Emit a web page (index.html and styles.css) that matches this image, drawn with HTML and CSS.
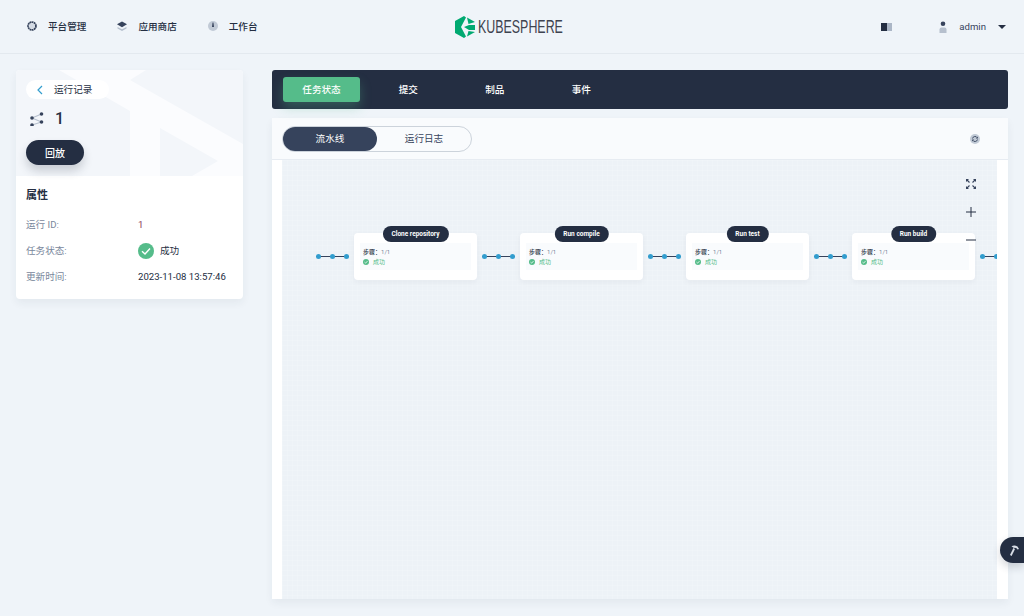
FILE: index.html
```html
<!DOCTYPE html>
<html lang="zh">
<head>
  <meta charset="UTF-8" />
  <meta name="viewport" content="width=device-width, initial-scale=1.0"/>
  <title>运行记录 - KubeSphere</title>
  <link rel="stylesheet" href="styles.css">
</head>
<body>

  <header class="topbar">
    <nav class="top-nav">
      <a class="top-link">
        <svg class="top-icon" viewBox="0 0 12 12"><circle cx="6" cy="6" r="3.9" fill="none" stroke="#36435c" stroke-width="1.900" stroke-dasharray="1.800 .4"/><circle cx="6" cy="6" r="2.700" fill="#d3dae4"/></svg>
        平台管理
      </a>
      <a class="top-link">
        <svg class="top-icon" viewBox="0 0 12 12"><path d="M1.500 7 6 9.200 10.500 7v1.600L6 11 1.500 8.600z" fill="#b6c0ce"/><path d="M6 1.500 11 4.300 6 7.200 1 4.300z" fill="#36435c"/></svg>
        应用商店
      </a>
      <a class="top-link">
        <svg class="top-icon" viewBox="0 0 12 12"><circle cx="6" cy="6" r="5" fill="#c1cad6"/><path d="M5.600 2.500h.8l.6 4.500H5z" fill="#36435c"/></svg>
        工作台
      </a>
    </nav>

    <div class="logo">
      <svg class="logo-mark" viewBox="0 0 20 22"><path d="M9 0 0 5V17L9 22 11 20.500 6 11 11 1.500z" fill="#00a971"/><path d="M12 1.500 20 6 13.500 8zM9 11 14 9H20V14H14zM13.500 15 20 16 12 20.500z" fill="#00a971"/></svg>
      <span class="logo-text">KUBESPHERE</span>
    </div>

    <div class="top-right">
      <svg class="mode-icon" viewBox="0 0 11 8"><rect width="6" height="8" fill="#242e42"/><rect x="6" width="5" height="8" fill="#abb6c6"/></svg>
      <svg class="user-icon" viewBox="0 0 10 12"><circle cx="5" cy="2.800" r="2.300" fill="#36435c"/><path d="M1.500 12V8.500Q1.500 6.500 3.500 6.500H6.500Q8.500 6.500 8.500 8.500V12z" fill="#b6c0ce"/></svg>
      <span class="user-name">admin</span>
      <span class="caret"></span>
    </div>
  </header>

  <main class="content">
    <aside class="side-card">
      <div class="banner">
        <svg class="banner-art" viewBox="0 0 227 106" preserveAspectRatio="none">
          <path fill-rule="evenodd" d="M43 0H130L114 10 227 74V106H114V41zM144 58 202 91 176 106H144z" fill="#fbfcfe"/>
        </svg>
        <div class="banner-body">
          <a class="back-pill">
            <svg class="back-icon" viewBox="0 0 6 10"><path d="M5 1 1 5 5 9" fill="none" stroke="#329dce" stroke-width="1.200"/></svg>
            运行记录
          </a>
          <div class="run-title">
            <svg class="run-icon" viewBox="0 0 14 14"><path d="M2 6 11.500 2M2 6 11.500 10M11.500 10 2 13" stroke="#b6c0ce" stroke-width="1.100" fill="none"/><circle cx="2" cy="6" r="1.800" fill="#36435c"/><circle cx="11.500" cy="2" r="1.800" fill="#36435c"/><circle cx="11.500" cy="10" r="1.800" fill="#36435c"/><circle cx="2" cy="13" r="1.800" fill="#36435c"/></svg>
            <span>1</span>
          </div>
          <button class="replay-btn">回放</button>
        </div>
      </div>
      <div class="props">
        <h3>属性</h3>
        <dl class="prop-list">
          <dt>运行 ID:</dt>
          <dd class="run-id">1</dd>
          <dt>任务状态:</dt>
          <dd class="status">
            <svg class="status-icon" viewBox="0 0 16 16"><circle cx="8" cy="8" r="8" fill="#55bc8a"/><path d="M4 8.300 7 11 12 5.500" fill="none" stroke="#fff" stroke-width="1.400"/></svg>
            成功
          </dd>
          <dt>更新时间:</dt>
          <dd>2023-11-08 13:57:46</dd>
        </dl>
      </div>
    </aside>

    <section class="main-col">
      <div class="tabs">
        <a class="tab tab-active">任务状态</a>
        <a class="tab">提交</a>
        <a class="tab">制品</a>
        <a class="tab">事件</a>
      </div>

      <div class="panel">
        <div class="toolbar">
          <div class="switch">
            <span class="switch-item switch-on">流水线</span>
            <span class="switch-item">运行日志</span>
          </div>
          <svg class="refresh" viewBox="0 0 10 10"><circle cx="5" cy="5" r="5" fill="#c1cad6"/><path d="M2.500 4.500A2.600 2.600 0 0 1 7.300 3.800M7.500 5.500A2.600 2.600 0 0 1 2.700 6.200" fill="none" stroke="#36435c" stroke-width=".9"/><path d="M7.800 2.500V4.400H5.900zM2.200 7.500V5.600H4.100z" fill="#36435c"/></svg>
        </div>

        <div class="canvas-wrap">
          <div class="canvas">
            <div class="zoom-tools">
              <svg viewBox="0 0 10 10"><path d="M.5.500 3.500 3.500M9.500.500 6.500 3.500M.5 9.500 3.500 6.500M9.500 9.500 6.500 6.500" stroke="#36435c" stroke-width="1.100"/><path d="M0 0H3L0 3zM10 0H7L10 3zM0 10H3L0 7zM10 10H7L10 7z" fill="#36435c"/></svg>
              <svg viewBox="0 0 10 10"><path d="M5 0V10M0 5H10" stroke="#242e42" stroke-width="1"/></svg>
              <svg viewBox="0 0 10 10"><path d="M0 5H10" stroke="#242e42" stroke-width="1"/></svg>
            </div>
            <div class="pipeline">
              <span class="link"><i></i><i></i><i></i></span>
              <div class="node">
                <span class="node-name">Clone repository</span>
                <div class="node-body">
                  <p class="node-steps">步骤：<em>1/1</em></p>
                  <p class="node-state"><svg viewBox="0 0 16 16"><circle cx="8" cy="8" r="8" fill="#55bc8a"/><path d="M4 8.300 7 11 12 5.500" fill="none" stroke="#fff" stroke-width="2"/></svg>成功</p>
                </div>
              </div>
              <span class="link"><i></i><i></i><i></i></span>
              <div class="node">
                <span class="node-name">Run compile</span>
                <div class="node-body">
                  <p class="node-steps">步骤：<em>1/1</em></p>
                  <p class="node-state"><svg viewBox="0 0 16 16"><circle cx="8" cy="8" r="8" fill="#55bc8a"/><path d="M4 8.300 7 11 12 5.500" fill="none" stroke="#fff" stroke-width="2"/></svg>成功</p>
                </div>
              </div>
              <span class="link"><i></i><i></i><i></i></span>
              <div class="node">
                <span class="node-name">Run test</span>
                <div class="node-body">
                  <p class="node-steps">步骤：<em>1/1</em></p>
                  <p class="node-state"><svg viewBox="0 0 16 16"><circle cx="8" cy="8" r="8" fill="#55bc8a"/><path d="M4 8.300 7 11 12 5.500" fill="none" stroke="#fff" stroke-width="2"/></svg>成功</p>
                </div>
              </div>
              <span class="link"><i></i><i></i><i></i></span>
              <div class="node">
                <span class="node-name">Run build</span>
                <div class="node-body">
                  <p class="node-steps">步骤：<em>1/1</em></p>
                  <p class="node-state"><svg viewBox="0 0 16 16"><circle cx="8" cy="8" r="8" fill="#55bc8a"/><path d="M4 8.300 7 11 12 5.500" fill="none" stroke="#fff" stroke-width="2"/></svg>成功</p>
                </div>
              </div>
              <span class="link"><i></i><i></i><i></i></span>
            </div>
          </div>
        </div>
      </div>
    </section>
  </main>

  <a class="tool-btn">
    <svg viewBox="0 0 10 12"><path d="M5.200 4.500 1.800 11.500" stroke="#d8dee7" stroke-width="1.800"/><path d="M2.500 2.200Q5.500.5 8.500 2.500L10 5 8.500 5.500 7.200 4 4.500 3.700z" fill="#d8dee7"/></svg>
  </a>

</body>
</html>
```

FILE: styles.css
```css
* {
  box-sizing: border-box;
}

html, body {
  height: 100%;
}

body {
  margin: 0;
  overflow: hidden;
  background-color: #eff4f9;
  color: #242e42;
  font-family: Roboto, "Noto Sans CJK SC", sans-serif;
  font-size: 9.600px;
  line-height: 14px;
}

/* top bar */
.topbar {
  display: grid;
  grid-template-columns: 1fr auto 1fr;
  align-items: center;
  height: 54px;
  padding: 0 18px 0 26px;
  border-bottom: 1px solid #e3e9ef;
}

.top-nav {
  display: flex;
  gap: 30px;
}

.top-link {
  display: flex;
  align-items: center;
  gap: 10px;
  font-weight: 500;
}

.top-icon {
  width: 12px;
  height: 12px;
  margin-top: -2px;
}

.logo {
  display: flex;
  align-items: center;
  gap: 3px;
  margin-right: 15px;
}

.logo-mark {
  width: 20px;
  height: 22px;
}

.logo-text {
  width: 85px;
  color: #3e4350;
  font-family: "Liberation Sans", sans-serif;
  font-size: 18px;
  line-height: 20px;
  white-space: nowrap;
  transform: scaleX(0.69);
  transform-origin: left center;
}

.top-right {
  display: flex;
  align-items: center;
  justify-content: flex-end;
}

.mode-icon {
  width: 11px;
  height: 8px;
  margin-right: 46px;
}

.user-icon {
  width: 10px;
  height: 12px;
  margin-right: 11px;
}

.user-name {
  margin-right: 12px;
  color: #36435c;
}

.caret {
  width: 0;
  height: 0;
  border-top: 4px solid #242e42;
  border-left: 4px solid transparent;
  border-right: 4px solid transparent;
}

/* page columns */
.content {
  display: flex;
  align-items: flex-start;
  gap: 29px;
  padding: 16px 16px 0;
}

/* left card */
.side-card {
  flex: none;
  width: 227px;
  border-radius: 4px;
  background-color: #fff;
  box-shadow: 0 4px 8px rgba(36, 46, 66, 0.06);
  overflow: hidden;
}

.banner {
  position: relative;
  height: 106px;
  background-color: #f3f6fa;
}

.banner-art {
  position: absolute;
  top: 0;
  left: 0;
  width: 100%;
  height: 100%;
}

.banner-body {
  position: relative;
  display: flex;
  flex-direction: column;
  align-items: flex-start;
  padding: 10px 10px 0;
}

.back-pill {
  display: flex;
  align-items: center;
  gap: 11px;
  width: 83px;
  height: 19px;
  padding-left: 11px;
  border-radius: 10px;
  background-color: #fff;
}

.back-icon {
  width: 6px;
  height: 10px;
}

.run-title {
  display: flex;
  align-items: center;
  gap: 11px;
  height: 22px;
  margin: 9px 0 0 4px;
  font-size: 16px;
  font-weight: 500;
}

.run-icon {
  width: 14px;
  height: 14px;
}

.replay-btn {
  width: 58px;
  height: 25px;
  margin-top: 10px;
  padding: 0;
  border: none;
  border-radius: 13px;
  background-color: #242e42;
  box-shadow: 0 6px 10px rgba(36, 46, 66, 0.2);
  color: #fff;
  font: 500 10px Roboto, "Noto Sans CJK SC", sans-serif;
}

.props {
  padding: 10px 10px 9px;
}

.props h3 {
  margin: 2px 0 0;
  font-size: 11px;
  font-weight: 700;
  line-height: 16px;
}

.prop-list {
  display: grid;
  grid-template-columns: 112px 1fr;
  grid-auto-rows: 26px;
  align-items: center;
  margin: 8px 0 0;
}

.prop-list dt {
  color: #79879c;
}

.prop-list dd {
  margin: 0;
}

.run-id {
  color: #8c3b5a;
}

.status {
  display: flex;
  align-items: center;
  gap: 6px;
}

.status-icon {
  width: 16px;
  height: 16px;
}

/* right column */
.main-col {
  flex: 1;
  min-width: 0;
}

.tabs {
  display: flex;
  align-items: center;
  height: 39px;
  padding-left: 11px;
  border-radius: 3px;
  background-color: #242e42;
}

.tab {
  width: 86.500px;
  height: 25px;
  color: #fff;
  font-weight: 500;
  line-height: 25px;
  text-align: center;
}

.tab-active {
  width: 77px;
  margin-right: 5px;
  border-radius: 3px;
  background-color: #55bc8a;
  box-shadow: 0 6px 12px rgba(85, 188, 138, 0.3);
}

.panel {
  margin-top: 9px;
  background-color: #fff;
  box-shadow: 0 4px 8px rgba(36, 46, 66, 0.06);
}

.toolbar {
  display: flex;
  align-items: center;
  justify-content: space-between;
  height: 42px;
  padding: 0 28px 0 10px;
  border-bottom: 1px solid #e7ecf2;
  background-color: #f9fbfd;
}

.switch {
  display: flex;
  width: 190px;
  height: 26px;
  border: 1px solid #ccd3db;
  border-radius: 13px;
}

.switch-item {
  width: 95px;
  line-height: 24px;
  text-align: center;
  color: #36435c;
}

.switch-on {
  border-radius: 12px;
  background-color: #36435c;
  color: #fff;
}

.refresh {
  width: 10px;
  height: 10px;
}

.canvas-wrap {
  height: 439px;
  padding: 0 11px 0 10px;
}

.canvas {
  position: relative;
  height: 100%;
  overflow: hidden;
  background-color: #edf2f7;
  background-image:
    linear-gradient(rgba(255, 255, 255, 0.12) 1px, transparent 1px),
    linear-gradient(90deg, rgba(255, 255, 255, 0.12) 1px, transparent 1px);
  background-size: 5px 5px;
}

.zoom-tools {
  position: absolute;
  top: 19px;
  right: 21px;
  z-index: 2;
  display: flex;
  flex-direction: column;
  gap: 18px;
}

.zoom-tools svg {
  display: block;
  width: 10px;
  height: 10px;
}

/* pipeline */
.pipeline {
  display: flex;
  align-items: center;
  gap: 5px;
  width: max-content;
  margin-top: 73px;
  padding-left: 34px;
}

.link {
  position: relative;
  display: flex;
  justify-content: space-between;
  flex: none;
  width: 33px;
  padding: 0;
}

.link::before {
  content: "";
  position: absolute;
  top: 2px;
  left: 0;
  right: 0;
  height: 1px;
  background-color: #36435c;
}

.link i {
  position: relative;
  width: 5px;
  height: 5px;
  border-radius: 50%;
  background-color: #329dce;
}

.node {
  position: relative;
  flex: none;
  width: 123px;
  height: 47px;
  padding: 10px 6px 0;
  border-radius: 4px;
  background-color: #fff;
  box-shadow: 0 2px 6px rgba(36, 46, 66, 0.05);
}

.node-name {
  position: absolute;
  top: -7px;
  left: 50%;
  transform: translateX(-50%);
  height: 16px;
  padding: 0 9px;
  border-radius: 8px;
  background-color: #242e42;
  color: #fff;
  font-size: 6.500px;
  font-weight: 700;
  line-height: 16px;
  white-space: nowrap;
}

.node-body {
  height: 27px;
  padding: 4px 3px 0;
  background-color: #f9fbfd;
}

.node-steps, .node-state {
  display: flex;
  align-items: center;
  margin: 0;
  height: 10px;
  font-size: 6px;
  line-height: 10px;
}

.node-steps {
  font-weight: 500;
}

.node-steps em {
  color: #79879c;
  font-style: normal;
  font-weight: 400;
}

.node-state {
  gap: 4px;
  color: #55bc8a;
}

.node-state svg {
  width: 6px;
  height: 6px;
}

.tool-btn {
  position: fixed;
  top: 537px;
  right: 0;
  display: flex;
  align-items: center;
  width: 24px;
  height: 26px;
  padding-left: 9px;
  border-radius: 13px 0 0 13px;
  background-color: #242e42;
  box-shadow: 0 4px 8px rgba(36, 46, 66, 0.2);
}

.tool-btn svg {
  width: 10px;
  height: 12px;
}
```
